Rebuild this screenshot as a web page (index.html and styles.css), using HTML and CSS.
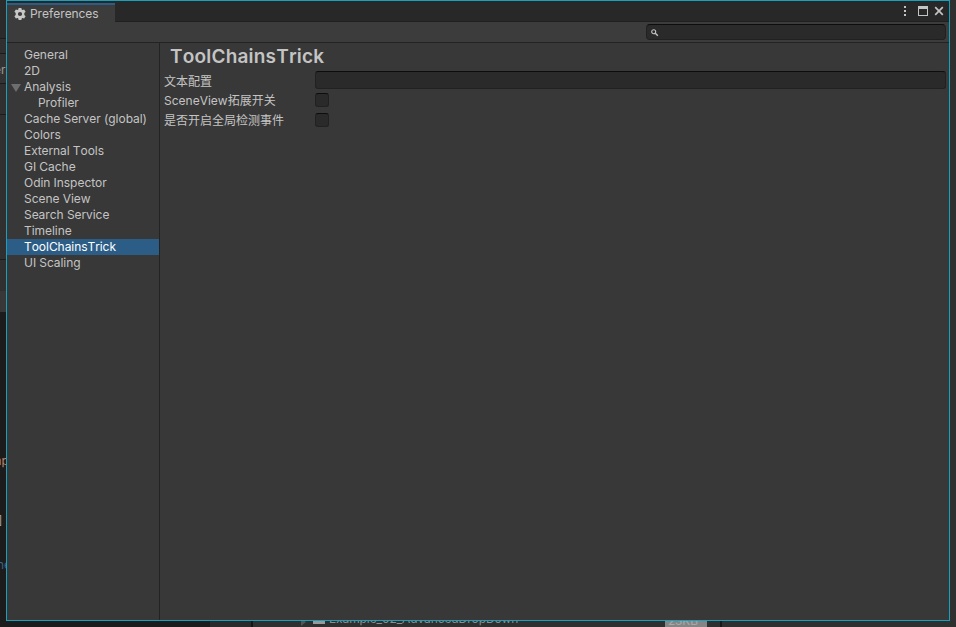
FILE: index.html
```
<!DOCTYPE html>
<html lang="zh-CN">
<head>
<meta charset="utf-8">
<title>Preferences</title>
<link rel="stylesheet" href="styles.css">
</head>
<body>
<div class="backdrop">
  <div class="edge-left">
    <div class="strip s1"></div>
    <div class="strip s2"></div>
    <div class="strip s3">er</div>
    <div class="strip s4"></div>
    <div class="strip s5"></div>
    <div class="strip s6"></div>
    <div class="code"><span class="c1">mp</span><span class="c2">]</span><span class="c3">ne</span></div>
  </div>
  <div class="edge-bottom">
    <div class="dock"></div>
    <div class="files">
      <svg class="arrow" width="7" height="8" viewBox="0 0 7 8"><path d="M1 0v8l5-4z" fill="#555"/></svg>
      <span class="folder"></span>
      <span class="file">Example_02_AdvancedDropDown</span>
      <span class="size">23KB</span>
    </div>
    <div class="rest"></div>
  </div>
</div>
<main class="window">
  <header class="titlebar">
    <div class="tab">
      <svg width="12" height="12" viewBox="0 0 12 12"><path fill="#c8c8c8" fill-rule="evenodd" d="M4.600 0h2.800l.4 1.700.6.3 1.700-.6 1.500 2.300-1.300 1.300v2l1.300 1.300-1.500 2.300-1.700-.6-.6.3-.4 1.700H4.600l-.4-1.700-.6-.3-1.700.6L.4 8.300 1.700 7V5L.4 3.700l1.500-2.300 1.700.6.6-.3zM6 3.900a2.100 2.100 0 1 0 0 4.200 2.100 2.100 0 0 0 0-4.200z"/></svg>
      <span>Preferences</span>
    </div>
    <div class="controls">
      <svg width="42" height="12" viewBox="0 0 42 12" fill="#c4c4c4">
        <path d="M2 1h2v2H2zM2 5h2v2H2zM2 9h2v2H2z"/>
        <path fill-rule="evenodd" d="M16 1h10v10H16zM17 4v6h8V4z"/>
        <path d="M33.200 2.200l7.600 7.600M40.800 2.200l-7.600 7.600" stroke="#c4c4c4" stroke-width="1.700"/>
      </svg>
    </div>
  </header>
  <div class="toolbar">
    <div class="search">
      <svg width="8" height="8" viewBox="0 0 8 8" fill="none" stroke="#c4c4c4"><circle cx="2.700" cy="2.700" r="2" stroke-width="1.100"/><path d="M4.300 4.300L6.800 6.800" stroke-width="1.400"/></svg>
    </div>
  </div>
  <div class="body">
    <nav class="sidebar">
      <div class="item">General</div>
      <div class="item">2D</div>
      <div class="item parent">Analysis</div>
      <div class="item child">Profiler</div>
      <div class="item">Cache Server (global)</div>
      <div class="item">Colors</div>
      <div class="item">External Tools</div>
      <div class="item">GI Cache</div>
      <div class="item">Odin Inspector</div>
      <div class="item">Scene View</div>
      <div class="item">Search Service</div>
      <div class="item">Timeline</div>
      <div class="item selected">ToolChainsTrick</div>
      <div class="item">UI Scaling</div>
    </nav>
    <section class="panel">
      <h1>ToolChainsTrick</h1>
      <div class="row first"><span class="label">文本配置</span><span class="input"></span></div>
      <div class="row"><span class="label">SceneView拓展开关</span><span class="check"></span></div>
      <div class="row"><span class="label">是否开启全局检测事件</span><span class="check"></span></div>
    </section>
  </div>
</main>
</body>
</html>
```
FILE: styles.css
```
* { box-sizing: border-box; }
body {
  margin: 0;
  width: 956px;
  height: 627px;
  overflow: hidden;
  position: relative;
  background: #303030;
  color: #c4c4c4;
  font: 12px/16px Inter, "Noto Sans CJK SC", sans-serif;
  font-kerning: none;
}
.backdrop { height: 627px; display: flex; flex-direction: column; justify-content: space-between; }
.edge-left { width: 6px; height: 621px; overflow: hidden; display: flex; flex-direction: column; }
.strip { flex: none; background: #303030; border-bottom: 1px solid #1c1c1c; }
.s1 { height: 39px; background: #2b2b2b; }
.s2 { height: 15px; }
.s3 { height: 30px; padding-top: 8px; text-indent: -6px; color: #999; background: #333; }
.s4 { height: 31px; }
.s5 { height: 145px; }
.s6 { height: 52px; background: linear-gradient(#303030 31px, #383838 31px); border: 0; }
.code { flex: 1; background: #1c1c1c; display: flex; flex-direction: column; padding-top: 141px; font: 12px/16px Inter, sans-serif; }
.code span { white-space: nowrap; }
.c1 { color: #b58570; text-indent: -9px; }
.c2 { color: #a0a0a0; margin-top: 43px; text-indent: -2px; }
.c3 { color: #35658a; margin-top: 29px; text-indent: -3px; }
.edge-bottom { height: 6px; display: flex; overflow: hidden; }
.dock { width: 253px; background: linear-gradient(90deg, #1c1c1c 210px, #2a2a2a 210px 251px, #151515 251px); }
.files { width: 469px; background: #303030; border-right: 2px solid #191919; display: flex; align-items: flex-start; }
.arrow { margin: -3px 0 0 47px; }
.folder { width: 12px; height: 3px; margin-left: 6px; background: #999; }
.file { margin: -10px 0 0 4px; width: 336px; color: #8d8d8d; letter-spacing: -0.1px; }
.size { width: 42px; height: 6px; background: #858585; color: #a8a8a8; line-height: 0; padding-left: 3px; letter-spacing: -0.2px; overflow: hidden; }
.rest { flex: 1; background: #303030; }

.window {
  position: absolute;
  left: 6px;
  top: 0;
  width: 944px;
  height: 621px;
  border: 1px solid #18a0bd;
  background: #383838;
  display: flex;
  flex-direction: column;
}
.titlebar { height: 21px; flex: none; display: flex; justify-content: space-between; background: linear-gradient(#282828 20px, #202020 20px); }
.tab { width: 108px; height: 19px; margin-top: 2px; padding: 1px 0 0 7px; border-top: 2px solid #2c5d87; background: #3c3c3c; display: flex; align-items: center; gap: 4px; letter-spacing: -0.08px; }
.controls { padding: 4px 5px 0 0; }
.controls svg { display: block; }
.toolbar { height: 21px; flex: none; background: #3c3c3c; border-bottom: 1px solid #232323; padding: 2px 3px 0 0; display: flex; justify-content: flex-end; }
.search { width: 300px; height: 16px; padding: 4px 0 0 4px; background: #2a2a2a; border: 1px solid #212121; border-top-color: #0d0d0d; border-radius: 4px; }
.search svg { display: block; }
.body { flex: 1; display: flex; }
.sidebar { width: 153px; padding-top: 4px; border-right: 1px solid #232323; letter-spacing: -0.04px; word-spacing: -0.1px; }
.item { height: 16px; padding-left: 17px; white-space: nowrap; }
.child { padding-left: 31px; }
.parent { display: flex; align-items: center; padding-left: 4px; }
.parent::before { content: ""; border: 5px solid transparent; border-top: 8px solid #6e6e6e; border-bottom: 0; margin-right: 3px; margin-top: 1px; }
.selected { background: #2c5d87; color: #fff; }
.panel { flex: 1; padding: 0 3px 0 4px; }
h1 { margin: 0; padding: 2px 0 0 6px; height: 28px; font-size: 19px; line-height: 24px; font-weight: 600; letter-spacing: 0.2px; }
.row { height: 20px; display: flex; align-items: flex-start; }
.label { width: 151px; padding-top: 2px; line-height: 16px; white-space: nowrap; }
.first .label { padding-top: 3px; }
.input { flex: 1; height: 18px; background: #2a2a2a; border: 1px solid #212121; border-top-color: #0d0d0d; border-radius: 3px; }
.check { width: 14px; height: 14px; margin-top: 2px; background: #2a2a2a; border: 1px solid #212121; border-top-color: #0d0d0d; border-radius: 3px; }
```
